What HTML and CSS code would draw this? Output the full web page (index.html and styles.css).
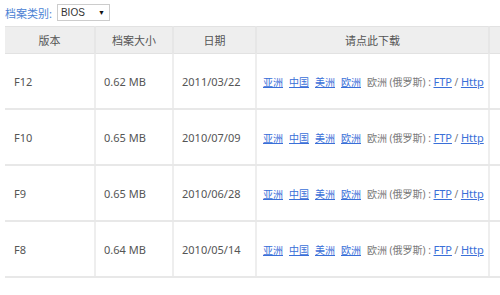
FILE: index.html
```html
<!DOCTYPE html>
<html>
<head>
<meta charset="utf-8">
<link rel="stylesheet" href="styles.css">
</head>
<body>
<div class="filter">
  <span class="filter-label">档案类别:</span>
  <span class="select">BIOS<span class="arrow">▼</span></span>
</div>
<table class="files">
  <colgroup>
    <col class="c1"><col class="c2"><col class="c3"><col class="c4"><col class="c5">
  </colgroup>
  <thead>
    <tr><th>版本</th><th>档案大小</th><th>日期</th><th>请点此下载</th><th></th></tr>
  </thead>
  <tbody>
    <tr><td>F12</td><td>0.62 MB</td><td>2011/03/22</td><td class="dl"><a>亚洲</a><a>中国</a><a>美洲</a><a>欧洲</a>欧洲 (俄罗斯) : <a class="p">FTP</a> / <a class="p">Http</a></td><td></td></tr>
    <tr><td>F10</td><td>0.65 MB</td><td>2010/07/09</td><td class="dl"><a>亚洲</a><a>中国</a><a>美洲</a><a>欧洲</a>欧洲 (俄罗斯) : <a class="p">FTP</a> / <a class="p">Http</a></td><td></td></tr>
    <tr><td>F9</td><td>0.65 MB</td><td>2010/06/28</td><td class="dl"><a>亚洲</a><a>中国</a><a>美洲</a><a>欧洲</a>欧洲 (俄罗斯) : <a class="p">FTP</a> / <a class="p">Http</a></td><td></td></tr>
    <tr><td>F8</td><td>0.64 MB</td><td>2010/05/14</td><td class="dl"><a>亚洲</a><a>中国</a><a>美洲</a><a>欧洲</a>欧洲 (俄罗斯) : <a class="p">FTP</a> / <a class="p">Http</a></td><td></td></tr>
  </tbody>
</table>
</body>
</html>
```

FILE: styles.css
```css
html, body {
  margin: 0;
  padding: 0;
  background: #fff;
  overflow: hidden;
}
body {
  font-family: "Noto Sans", "Noto Sans CJK SC", sans-serif;
  font-size: 11px;
  color: #555;
  padding: 4px 0 0 5px;
}
.filter {
  display: flex;
  align-items: center;
  gap: 5px;
  height: 17px;
}
.filter-label {
  color: #4a7fd4;
  font-size: 11px;
}
.select {
  display: flex;
  justify-content: space-between;
  align-items: center;
  box-sizing: border-box;
  width: 53px;
  height: 17px;
  border: 1px solid #ccc;
  padding: 0 4px 0 3px;
  font-family: "Liberation Sans", sans-serif;
  font-size: 10px;
  color: #333;
}
.arrow {
  font-size: 7px;
  color: #111;
}
.files {
  border-collapse: collapse;
  table-layout: fixed;
  margin-top: 5px;
  width: 495px;
}
.c1 { width: 90px; }
.c2 { width: 78px; }
.c3 { width: 83px; }
.c4 { width: 233px; }
.c5 { width: 11px; }
th {
  background: #eeeeee;
  height: 26px;
  padding: 0;
  font-weight: normal;
  color: #555;
  font-size: 11px;
  border-top: 1px solid #e2e2e2;
  border-bottom: 1px solid #e2e2e2;
  border-left: 2px solid #e6e6e6;
}
th:first-child, td:first-child { border-left: none; }
td {
  height: 54px;
  padding: 0 0 0 8px;
  border-bottom: 2px solid #e8e8e8;
  border-left: 2px solid #eeeeee;
  white-space: nowrap;
  font-size: 11px;
  color: #555;
}
td:first-child { padding-left: 9px; }
td.dl {
  padding-left: 6px;
  font-size: 10px;
  color: #777;
}
td.dl a {
  color: #3a6fd8;
  text-decoration: underline;
  margin-right: 6px;
}
td.dl a.p {
  margin-right: 0;
  font-size: 11px;
}
```
